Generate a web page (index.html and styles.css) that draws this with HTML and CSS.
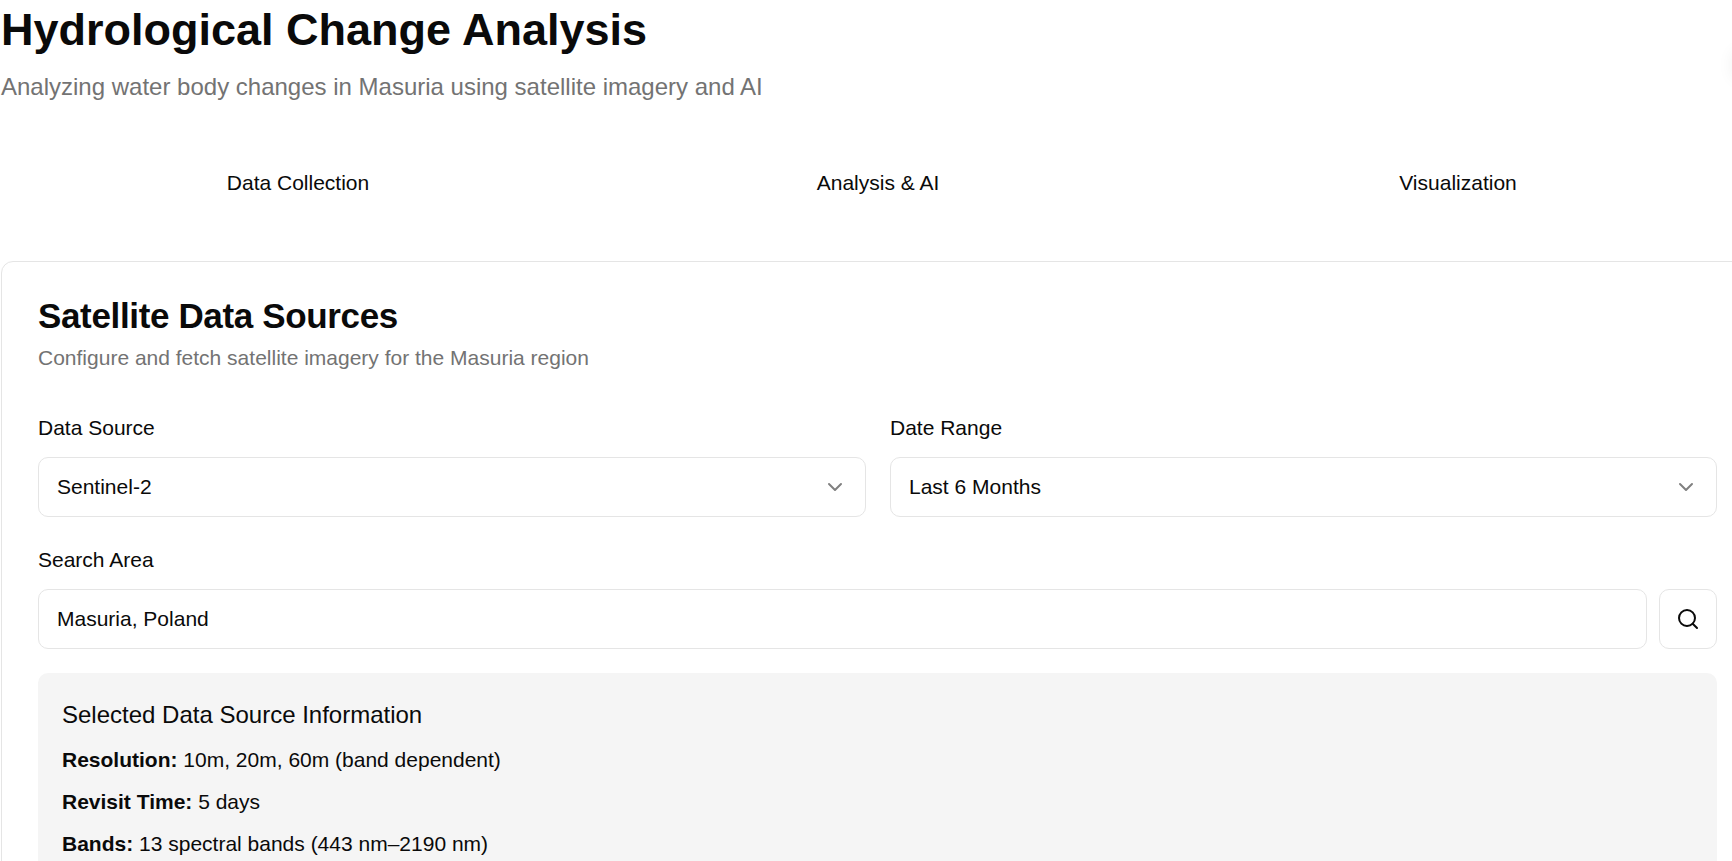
FILE: index.html
```html
<!DOCTYPE html>
<html lang="en">
<head>
    <meta charset="UTF-8">
    <meta name="viewport" content="width=device-width, initial-scale=1.0">
    <title>Hydrological Change Analysis</title>
    <link rel="stylesheet" href="styles.css">
</head>
<body>
    <div class="theme-glow"></div>
    <main class="page">
        <header class="page-header">
            <h1>Hydrological Change Analysis</h1>
            <p class="subtitle">Analyzing water body changes in Masuria using satellite imagery and AI</p>
        </header>

        <nav class="tabs">
            <button class="tab">Data Collection</button>
            <button class="tab">Analysis &amp; AI</button>
            <button class="tab">Visualization</button>
        </nav>

        <section class="card">
            <h2>Satellite Data Sources</h2>
            <p class="card-desc">Configure and fetch satellite imagery for the Masuria region</p>

            <div class="field-row">
                <div class="field">
                    <label>Data Source</label>
                    <div class="select">
                        <span>Sentinel-2</span>
                        <svg class="chevron" viewBox="0 0 24 24"><path d="m6 9 6 6 6-6"/></svg>
                    </div>
                </div>
                <div class="field">
                    <label>Date Range</label>
                    <div class="select">
                        <span>Last 6 Months</span>
                        <svg class="chevron" viewBox="0 0 24 24"><path d="m6 9 6 6 6-6"/></svg>
                    </div>
                </div>
            </div>

            <div class="field search-field">
                <label>Search Area</label>
                <div class="search-row">
                    <input class="text-input" type="text" value="Masuria, Poland">
                    <button class="icon-btn">
                        <svg class="search-icon" viewBox="0 0 24 24"><circle cx="11" cy="11" r="8"/><path d="m21 21-4.3-4.3"/></svg>
                    </button>
                </div>
            </div>

            <div class="info-box">
                <h3>Selected Data Source Information</h3>
                <p><strong>Resolution:</strong> 10m, 20m, 60m (band dependent)</p>
                <p><strong>Revisit Time:</strong> 5 days</p>
                <p><strong>Bands:</strong> 13 spectral bands (443 nm–2190 nm)</p>
            </div>
        </section>
    </main>
</body>
</html>
```

FILE: styles.css
```css
* {
    box-sizing: border-box;
}

html, body {
    margin: 0;
    height: 100%;
    overflow: hidden;
}

body {
    font-family: "Liberation Sans", Arial, sans-serif;
    background-color: #fff;
    color: #0a0a0a;
}

.page {
    width: 1752px;
    margin-left: 1px;
}

.theme-glow {
    position: absolute;
    top: 50px;
    right: -40px;
    width: 40px;
    height: 30px;
    border-radius: 8px;
    box-shadow: 0 0 16px rgba(0, 0, 0, 0.06);
}

h1 {
    margin: 0;
    font-size: 45px;
    line-height: 60px;
    font-weight: 700;
}

.subtitle {
    margin: 0;
    padding-top: 9px;
    font-size: 24px;
    line-height: 36px;
    color: #737373;
}

.tabs {
    display: grid;
    grid-template-columns: repeat(3, 1fr);
    height: 48px;
    margin: 54px 0;
    padding: 0 5px 0 7px;
}

.tab {
    border: none;
    background: none;
    font-family: inherit;
    font-size: 21px;
    color: #0a0a0a;
}

.card {
    border: 1px solid #e5e5e5;
    border-radius: 12px;
    padding: 36px;
    background: #fff;
    height: 800px;
}

h2 {
    margin: 0;
    font-size: 35px;
    line-height: 36px;
    font-weight: 700;
    letter-spacing: -0.35px;
}

.card-desc {
    margin: 10px 0 0;
    font-size: 21px;
    line-height: 28px;
    color: #737373;
}

.field-row {
    display: grid;
    grid-template-columns: 828px 827px;
    gap: 24px;
    margin-top: 42px;
}

label {
    display: block;
    font-size: 21px;
    line-height: 28px;
    margin-bottom: 15px;
}

.select, .text-input, .icon-btn {
    height: 60px;
    border: 1px solid #e5e5e5;
    border-radius: 10px;
    background: #fff;
}

.select {
    display: flex;
    align-items: center;
    justify-content: space-between;
    padding: 0 18px;
    font-size: 21px;
}

.chevron {
    width: 24px;
    height: 24px;
    fill: none;
    stroke: #808080;
    stroke-width: 2;
    stroke-linecap: round;
    stroke-linejoin: round;
}

.search-field {
    margin-top: 29px;
}

.search-row {
    display: flex;
    gap: 12px;
    width: 1679px;
}

.text-input {
    flex: 1;
    padding: 0 18px;
    font-family: inherit;
    font-size: 21px;
    color: #0a0a0a;
}

.icon-btn {
    width: 58px;
    padding: 0;
    display: flex;
    align-items: center;
    justify-content: center;
}

.search-icon {
    width: 24px;
    height: 24px;
    fill: none;
    stroke: #0a0a0a;
    stroke-width: 2;
    stroke-linecap: round;
    stroke-linejoin: round;
}

.info-box {
    margin-top: 24px;
    width: 1679px;
    background: #f5f5f5;
    border-radius: 10px;
    padding: 26px 24px;
}

h3 {
    margin: 0;
    font-size: 24px;
    line-height: 32px;
    font-weight: 400;
}

.info-box p {
    margin: 12px 0 0;
    font-size: 21px;
    line-height: 30px;
}

.info-box h3 + p {
    margin-top: 14px;
}
```
